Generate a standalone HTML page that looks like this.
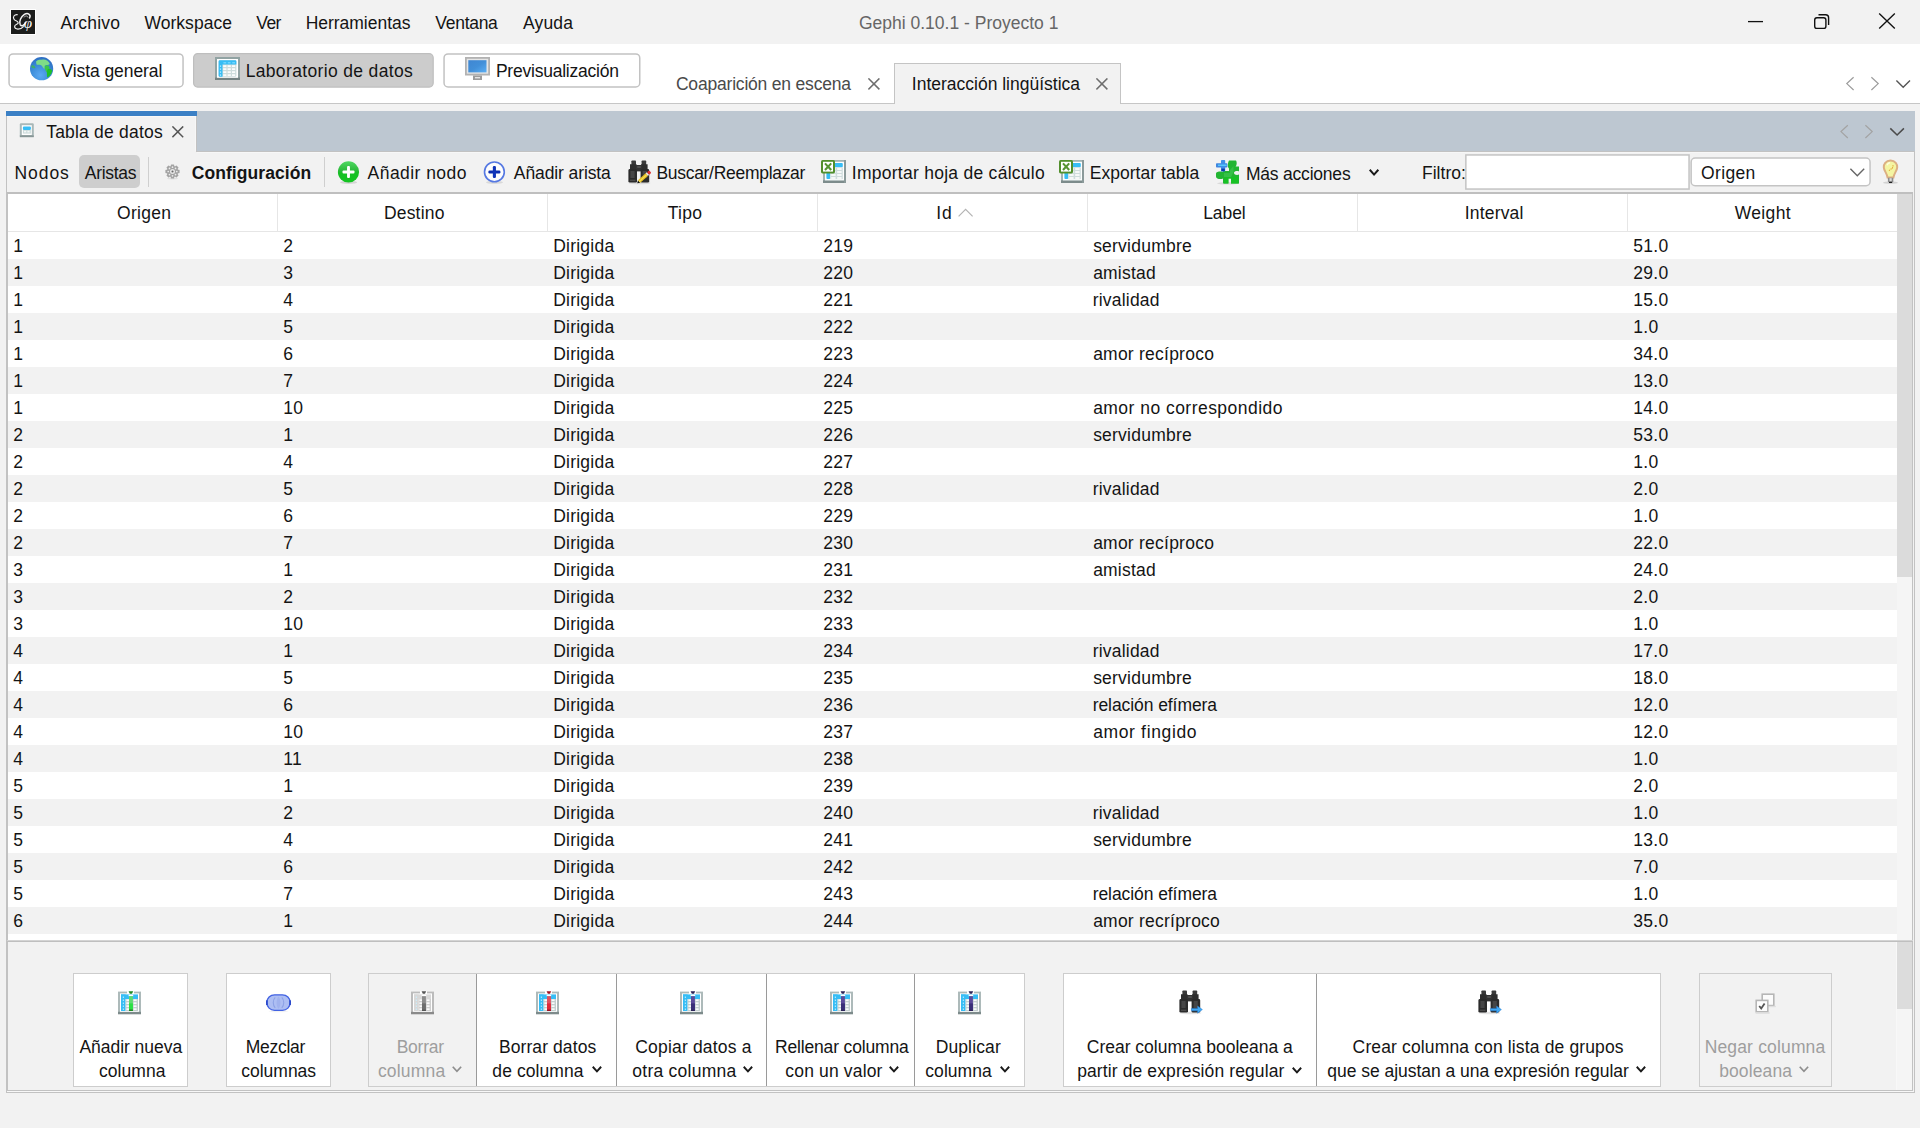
<!DOCTYPE html>
<html lang="es"><head><meta charset="utf-8"><title>Gephi 0.10.1 - Proyecto 1</title>
<style>
html,body{margin:0;padding:0}
body{width:1920px;height:1128px;overflow:hidden;background:#f2f2f2;position:relative;font-family:"Liberation Sans",sans-serif}
.a{position:absolute;display:block}
.t{position:absolute;white-space:pre;font-size:17.5px;line-height:1;color:#141414}
</style></head>
<body>
<svg class="a" style="left:10px;top:9px" width="26" height="26" viewBox="0 0 26 26"><rect x="0" y="0" width="26" height="26" fill="#fff"/><rect x="1" y="1" width="24" height="24" fill="#1c1d1c"/><g fill="none" stroke="#f2f2f2" stroke-linecap="round"><path d="M7.2 5.6 C4.2 5.4 2.6 8 4 10.2 C5.2 12 8.2 11.8 8.2 14 C8.2 15.6 4.6 15 4.6 17.6 C4.6 20.8 10.5 21 13.4 17.6" stroke-width="1.15"/><path d="M19.6 9 C21.4 5.2 17.6 3.4 14.4 5.4 C10.8 7.8 8.8 12.6 10.2 15.6 C11.4 18 14.4 16.4 15.6 13.4" stroke-width="1.5"/><path d="M14 8.2 C15.4 6.6 17.6 6.4 18 8.2" stroke-width="0.8" stroke="#cfcfcf"/></g><text x="13.8" y="19.2" font-family="Liberation Serif, serif" font-style="italic" font-size="15" fill="#ffffff">φ</text></svg>
<svg class="a" style="left:1740px;top:8px" width="170" height="28" viewBox="0 0 170 28"><path d="M8 13.6 H23" stroke="#111" stroke-width="1.3" fill="none"/><rect x="74.7" y="9.8" width="11.2" height="10.6" rx="2.2" fill="none" stroke="#111" stroke-width="1.4"/><path d="M78.5 6.7 H85.6 a3 3 0 0 1 3 3 V17" fill="none" stroke="#111" stroke-width="1.4"/><path d="M139.2 5.4 L154.8 20.6 M154.8 5.4 L139.2 20.6" stroke="#111" stroke-width="1.35" fill="none"/></svg>
<div class="a" style="left:0px;top:44px;width:1920px;height:59px;background:#fff;"></div>
<div class="a" style="left:0px;top:103px;width:1920px;height:1px;background:#c6c6c6;"></div>
<svg class="a" style="left:7px;top:52px" width="179" height="38" viewBox="0 0 179 38"><rect x="2.05" y="1.95" width="174.00" height="33.00" rx="4" fill="#fff" stroke="#c2c2c2" stroke-width="1.5"/></svg>
<svg class="a" style="left:192px;top:52px" width="244" height="38" viewBox="0 0 244 38"><rect x="1.60" y="1.70" width="239.60" height="33.40" rx="4" fill="#cccccc" stroke="#bebebe" stroke-width="1.2"/></svg>
<svg class="a" style="left:442px;top:52px" width="201" height="38" viewBox="0 0 201 38"><rect x="2.05" y="1.95" width="195.70" height="33.00" rx="4" fill="#fff" stroke="#c2c2c2" stroke-width="1.5"/></svg>
<svg class="a" style="left:29px;top:56px" width="26" height="26" viewBox="0 0 26 26"><defs><radialGradient id="gl" cx="0.45" cy="0.78" r="0.75"><stop offset="0" stop-color="#5aa9f2"/><stop offset="0.6" stop-color="#3a8ad6"/><stop offset="1" stop-color="#2f6fc4"/></radialGradient></defs><circle cx="12.6" cy="12.7" r="11.6" fill="url(#gl)"/><path d="M7 5.5 C9 3.5 12 4 14 3.6 C17 3.4 20 5.5 20.8 8 C19 9.5 18 8.5 16 9.5 C15 11 16 12 15.5 13 C14 12 13.5 10.5 12.5 9.5 C11 8 9 9.5 7.5 8.5 Z" fill="#7fdc86"/><path d="M16 10 C18 8.5 20 9.5 20.5 11.5 C19.5 13.5 18.5 15 18.2 17 C17 16 16.5 14 15.8 12.5 Z" fill="#3cc648"/><path d="M18.3 13.8 C20 11.8 22.5 13 23.2 15 C22.5 18 20.5 20.5 18.2 21.5 C17.6 19 18 16 18.3 13.8 Z" fill="#1fc02a"/><path d="M2.6 9.5 C4.5 8.5 6 10 6.4 12 C5 12.6 3.5 12 2.2 11 Z" fill="#3fae6a"/></svg>
<svg class="a" style="left:215px;top:57px" width="25" height="23" viewBox="0 0 25 23"><rect x="0" y="0" width="25" height="23" fill="#91a3a3"/><rect x="0" y="20.6" width="25" height="2.4" fill="#748282"/><rect x="2" y="2" width="21" height="18.8" fill="#fff"/><rect x="3.6" y="3.2" width="17.8" height="16.5" rx="1.2" fill="#cddcdc"/><path d="M4.8 3.2 H20.2 a1.2 1.2 0 0 1 1.2 1.2 V7.4 H7.5 V19.7 H4.8 a1.2 1.2 0 0 1 -1.2 -1.2 V4.4 a1.2 1.2 0 0 1 1.2 -1.2 Z" fill="#37bdf5"/><rect x="8.2" y="8.3" width="3.2" height="1.6" fill="#fff"/><rect x="8.2" y="11.3" width="3.2" height="1.6" fill="#fff"/><rect x="8.2" y="14.3" width="3.2" height="1.6" fill="#fff"/><rect x="8.2" y="17.3" width="3.2" height="1.6" fill="#fff"/><rect x="12.6" y="8.3" width="3.2" height="1.6" fill="#fff"/><rect x="12.6" y="11.3" width="3.2" height="1.6" fill="#fff"/><rect x="12.6" y="14.3" width="3.2" height="1.6" fill="#fff"/><rect x="12.6" y="17.3" width="3.2" height="1.6" fill="#fff"/><rect x="17.0" y="8.3" width="3.2" height="1.6" fill="#fff"/><rect x="17.0" y="11.3" width="3.2" height="1.6" fill="#fff"/><rect x="17.0" y="14.3" width="3.2" height="1.6" fill="#fff"/><rect x="17.0" y="17.3" width="3.2" height="1.6" fill="#fff"/><rect x="8.4" y="5.2" width="2.8" height="1.2" fill="#7fdcff"/><rect x="12.8" y="5.2" width="2.8" height="1.2" fill="#7fdcff"/><rect x="17.200000000000003" y="5.2" width="2.8" height="1.2" fill="#7fdcff"/><rect x="4.9" y="8.5" width="1.2" height="1.2" fill="#c8f2ff"/><rect x="4.9" y="11.5" width="1.2" height="1.2" fill="#c8f2ff"/><rect x="4.9" y="14.5" width="1.2" height="1.2" fill="#c8f2ff"/><rect x="4.9" y="17.5" width="1.2" height="1.2" fill="#c8f2ff"/></svg>
<svg class="a" style="left:465px;top:57px" width="25" height="24" viewBox="0 0 25 24"><rect x="0" y="0" width="25" height="18.5" fill="#b2b2b2"/><rect x="1.8" y="1.8" width="21.4" height="14.9" fill="#e6e6e6"/><defs><linearGradient id="mo" x1="0" y1="0" x2="1" y2="1"><stop offset="0" stop-color="#3f86d2"/><stop offset="0.5" stop-color="#428fd8"/><stop offset="1" stop-color="#5aaef4"/></linearGradient></defs><rect x="3.3" y="3.2" width="18.2" height="12.2" fill="url(#mo)"/><rect x="8" y="18.5" width="9" height="4.5" fill="#9c9c9c"/><rect x="10" y="20" width="5" height="1.4" fill="#e4e4e4"/></svg>
<div class="a" style="left:894px;top:63px;width:227px;height:41px;background:#f2f2f2;border:1px solid #c4c4c4;border-bottom:none;box-sizing:border-box;"></div>
<svg class="a" style="left:868.1px;top:78.3px" width="12" height="12" viewBox="0 0 12 12"><path d="M0.4 0.4 L11.4 11.4 M11.4 0.4 L0.4 11.4" stroke="#6e6e6e" stroke-width="1.5" fill="none"/></svg>
<svg class="a" style="left:1096.3px;top:78.3px" width="12" height="12" viewBox="0 0 12 12"><path d="M0.4 0.4 L11.4 11.4 M11.4 0.4 L0.4 11.4" stroke="#6e6e6e" stroke-width="1.5" fill="none"/></svg>
<svg class="a" style="left:1840px;top:74px" width="76" height="20" viewBox="0 0 76 20"><path d="M13.6 3.2 L6.8 9.6 L13.6 16" stroke="#9c9c9c" stroke-width="1.2" fill="none"/><path d="M31.4 3.2 L38.2 9.6 L31.4 16" stroke="#9c9c9c" stroke-width="1.2" fill="none"/><path d="M56.4 6.6 L63.2 13.2 L70 6.6" stroke="#555" stroke-width="1.4" fill="none"/></svg>
<div class="a" style="left:6px;top:111px;width:1909px;height:40px;background:#bdc7d1;"></div>
<div class="a" style="left:6px;top:111px;width:191px;height:40px;background:#f2f2f2;"></div>
<div class="a" style="left:6px;top:111px;width:191px;height:5px;background:#3b80c5;"></div>
<div class="a" style="left:6px;top:110px;width:191px;height:1px;background:#f9f8f6;"></div>
<div class="a" style="left:7px;top:116px;width:189px;height:1px;background:#faf8f6;"></div>
<div class="a" style="left:196px;top:116px;width:1px;height:36px;background:#c2c2c2;"></div>
<div class="a" style="left:195px;top:117px;width:1px;height:34px;background:#f7f7f7;"></div>
<div class="a" style="left:196px;top:151px;width:1719px;height:1px;background:#c2c2c2;"></div>
<div class="a" style="left:197px;top:152px;width:1717px;height:1px;background:#f7f7f7;"></div>
<div class="a" style="left:6px;top:116px;width:1px;height:977px;background:#c2c2c2;"></div>
<div class="a" style="left:6px;top:1092px;width:1909px;height:1px;background:#c2c2c2;"></div>
<div class="a" style="left:1914px;top:151px;width:1px;height:942px;background:#c2c2c2;"></div>
<svg class="a" style="left:19px;top:122px" width="16" height="16" viewBox="0 0 16 16"><rect x="0.8" y="1.2" width="14" height="13.8" rx="1.2" fill="#a9b8b8"/><rect x="0.8" y="13.4" width="14" height="1.8" fill="#879696"/><rect x="2.8" y="3.2" width="10" height="9.8" fill="#fff"/><rect x="3.9" y="4.4" width="8" height="3.6" rx="1" fill="#37bdf5"/><rect x="3.9" y="8" width="8" height="3.6" fill="#cddcdc"/><rect x="5" y="8.8" width="2.2" height="1.6" fill="#f4f8f8"/><rect x="8.4" y="8.8" width="2.2" height="1.6" fill="#f4f8f8"/></svg>
<svg class="a" style="left:172.3px;top:126.4px" width="12" height="12" viewBox="0 0 12 12"><path d="M0.4 0.4 L11.2 11.2 M11.2 0.4 L0.4 11.2" stroke="#555" stroke-width="1.5" fill="none"/></svg>
<svg class="a" style="left:1834px;top:122px" width="76" height="20" viewBox="0 0 76 20"><path d="M13.8 3.2 L7 9.6 L13.8 16" stroke="#a3a3a3" stroke-width="1.2" fill="none"/><path d="M31.4 3.2 L38.2 9.6 L31.4 16" stroke="#a3a3a3" stroke-width="1.2" fill="none"/><path d="M56.3 6.4 L63.1 13 L69.9 6.4" stroke="#4b4b4b" stroke-width="1.5" fill="none"/></svg>
<div class="a" style="left:79px;top:155px;width:61px;height:33px;background:#cecece;border-radius:5px;"></div>
<div class="a" style="left:148px;top:157px;width:1px;height:30px;background:#cfcfcf;"></div>
<div class="a" style="left:324px;top:157px;width:1px;height:30px;background:#cfcfcf;"></div>
<svg class="a" style="left:165.2px;top:163.5px" width="15" height="16" viewBox="0 0 15 16"><ellipse cx="7.5" cy="14.6" rx="5.5" ry="0.9" fill="#000" opacity="0.07"/><rect x="-1.7" y="-7.1" width="3.4" height="3" rx="0.6" transform="translate(7.5,7.5) rotate(0)" fill="#a3a3a3"/><rect x="-1.7" y="-7.1" width="3.4" height="3" rx="0.6" transform="translate(7.5,7.5) rotate(45)" fill="#a3a3a3"/><rect x="-1.7" y="-7.1" width="3.4" height="3" rx="0.6" transform="translate(7.5,7.5) rotate(90)" fill="#a3a3a3"/><rect x="-1.7" y="-7.1" width="3.4" height="3" rx="0.6" transform="translate(7.5,7.5) rotate(135)" fill="#a3a3a3"/><rect x="-1.7" y="-7.1" width="3.4" height="3" rx="0.6" transform="translate(7.5,7.5) rotate(180)" fill="#a3a3a3"/><rect x="-1.7" y="-7.1" width="3.4" height="3" rx="0.6" transform="translate(7.5,7.5) rotate(225)" fill="#a3a3a3"/><rect x="-1.7" y="-7.1" width="3.4" height="3" rx="0.6" transform="translate(7.5,7.5) rotate(270)" fill="#a3a3a3"/><rect x="-1.7" y="-7.1" width="3.4" height="3" rx="0.6" transform="translate(7.5,7.5) rotate(315)" fill="#a3a3a3"/><circle cx="7.5" cy="7.5" r="5.7" fill="#a3a3a3"/><circle cx="7.50" cy="3.20" r="0.85" fill="#ededed"/><circle cx="10.54" cy="4.46" r="0.85" fill="#ededed"/><circle cx="11.80" cy="7.50" r="0.85" fill="#ededed"/><circle cx="10.54" cy="10.54" r="0.85" fill="#ededed"/><circle cx="7.50" cy="11.80" r="0.85" fill="#ededed"/><circle cx="4.46" cy="10.54" r="0.85" fill="#ededed"/><circle cx="3.20" cy="7.50" r="0.85" fill="#ededed"/><circle cx="4.46" cy="4.46" r="0.85" fill="#ededed"/><circle cx="7.5" cy="7.5" r="2.5" fill="#e6e6e6"/><circle cx="7.5" cy="7.5" r="1.05" fill="#686868"/></svg>
<svg class="a" style="left:337px;top:160px" width="24" height="26" viewBox="0 0 24 26"><defs><linearGradient id="gp" x1="0" y1="0" x2="0" y2="1"><stop offset="0" stop-color="#4fd862"/><stop offset="0.45" stop-color="#2bb83a"/><stop offset="0.55" stop-color="#16c024"/><stop offset="1" stop-color="#14c422"/></linearGradient></defs><ellipse cx="11.6" cy="22.4" rx="8.5" ry="1.6" fill="#000" opacity="0.12"/><circle cx="11.5" cy="11.9" r="10.6" fill="url(#gp)"/><rect x="5.5" y="10.5" width="12" height="2.9" rx="1" fill="#fff"/><rect x="10.05" y="6" width="2.9" height="12" rx="1" fill="#fff"/></svg>
<svg class="a" style="left:483px;top:160px" width="24" height="26" viewBox="0 0 24 26"><ellipse cx="11.5" cy="22.4" rx="8.5" ry="1.5" fill="#000" opacity="0.10"/><circle cx="11.4" cy="11.9" r="9.9" fill="#fdfdfd" stroke="#5578e2" stroke-width="1.6"/><rect x="5.4" y="10.4" width="12" height="3.1" rx="1.2" fill="#0b2db0"/><rect x="9.85" y="6" width="3.1" height="12" rx="1.2" fill="#1034b8"/></svg>
<svg class="a" style="left:628px;top:160px" width="25" height="25" viewBox="0 0 25 25"><ellipse cx="11.5" cy="23" rx="11" ry="1.3" fill="#000" opacity="0.10"/><rect x="3.4" y="0.4" width="4.6" height="5" rx="0.8" fill="#3a3a3a"/><rect x="13.6" y="0.4" width="4.6" height="5" rx="0.8" fill="#3a3a3a"/><path d="M2 4.2 H8.6 V10 H2 Z M13 4.2 H19.6 V10 H13 Z" fill="#2e2e2e"/><rect x="8" y="5" width="6" height="6.4" fill="#333"/><rect x="9.2" y="6.2" width="3.6" height="1.6" fill="#555"/><rect x="0.4" y="9" width="8.6" height="13.6" rx="1.4" fill="#2b2b2b"/><rect x="12.6" y="9" width="8.6" height="13.6" rx="1.4" fill="#2b2b2b"/><rect x="2.4" y="11" width="4.2" height="7" fill="#454545"/><rect x="14.6" y="11" width="4.2" height="7" fill="#454545"/><rect x="2" y="19.6" width="5.4" height="1.4" fill="#4a4a4a"/><g transform="translate(9.3,23.2) rotate(-42)"><path d="M0 0 L2.4 -1.7 L2.4 1.7 Z" fill="#111"/><rect x="2.4" y="-1.7" width="10.4" height="3.4" fill="#e8c020"/><rect x="2.4" y="-0.5" width="10.4" height="1" fill="#f6e060"/><rect x="12.8" y="-1.7" width="1.6" height="3.4" fill="#eee"/><rect x="14.4" y="-1.7" width="3" height="3.4" rx="1" fill="#e03030"/></g></svg>
<svg class="a" style="left:821px;top:160px" width="26" height="24" viewBox="0 0 26 24"><rect x="2" y="0" width="23" height="23" fill="#a3b3b3"/><rect x="2" y="20.4" width="23" height="2.6" fill="#7d8c8c"/><rect x="23" y="0" width="2" height="23" fill="#8b9a9a"/><rect x="4" y="1.8" width="19" height="18.6" fill="#fdfefe"/><rect x="5.4" y="3" width="16.4" height="4.2" rx="1" fill="#37bdf5"/><rect x="5.4" y="3" width="3.8" height="16" rx="1" fill="#37bdf5"/><rect x="9.4" y="7.4" width="12.4" height="11.8" fill="#cfdcdc"/><rect x="10.2" y="8.2" width="4.4" height="1.6" fill="#fff"/><rect x="10.2" y="11.2" width="4.4" height="1.6" fill="#fff"/><rect x="10.2" y="14.2" width="4.4" height="1.6" fill="#fff"/><rect x="10.2" y="17.2" width="4.4" height="1.6" fill="#fff"/><rect x="16.2" y="8.2" width="4.4" height="1.6" fill="#fff"/><rect x="16.2" y="11.2" width="4.4" height="1.6" fill="#fff"/><rect x="16.2" y="14.2" width="4.4" height="1.6" fill="#fff"/><rect x="16.2" y="17.2" width="4.4" height="1.6" fill="#fff"/><rect x="0" y="0" width="14" height="13.4" rx="1.6" fill="#528f2c"/><rect x="2" y="1.8" width="10" height="9.8" fill="#fff"/><path d="M4 3.4 L10.2 10 M10.2 3.4 L4 10" stroke="#569432" stroke-width="2.1" fill="none"/></svg>
<svg class="a" style="left:1059px;top:160px" width="26" height="24" viewBox="0 0 26 24"><rect x="2" y="0" width="23" height="23" fill="#a3b3b3"/><rect x="2" y="20.4" width="23" height="2.6" fill="#7d8c8c"/><rect x="23" y="0" width="2" height="23" fill="#8b9a9a"/><rect x="4" y="1.8" width="19" height="18.6" fill="#fdfefe"/><rect x="5.4" y="3" width="16.4" height="4.2" rx="1" fill="#37bdf5"/><rect x="5.4" y="3" width="3.8" height="16" rx="1" fill="#37bdf5"/><rect x="9.4" y="7.4" width="12.4" height="11.8" fill="#cfdcdc"/><rect x="10.2" y="8.2" width="4.4" height="1.6" fill="#fff"/><rect x="10.2" y="11.2" width="4.4" height="1.6" fill="#fff"/><rect x="10.2" y="14.2" width="4.4" height="1.6" fill="#fff"/><rect x="10.2" y="17.2" width="4.4" height="1.6" fill="#fff"/><rect x="16.2" y="8.2" width="4.4" height="1.6" fill="#fff"/><rect x="16.2" y="11.2" width="4.4" height="1.6" fill="#fff"/><rect x="16.2" y="14.2" width="4.4" height="1.6" fill="#fff"/><rect x="16.2" y="17.2" width="4.4" height="1.6" fill="#fff"/><rect x="0" y="0" width="14" height="13.4" rx="1.6" fill="#528f2c"/><rect x="2" y="1.8" width="10" height="9.8" fill="#fff"/><path d="M4 3.4 L10.2 10 M10.2 3.4 L4 10" stroke="#569432" stroke-width="2.1" fill="none"/></svg>
<svg class="a" style="left:1215px;top:159px" width="26" height="26" viewBox="0 0 26 26"><ellipse cx="13" cy="24.3" rx="11" ry="1.2" fill="#000" opacity="0.10"/><path d="M8 12 H14 V9.5 C12 8 13 3 14 1.5 H21 C22 3 22 6 20.6 7.5 H24 V12.5 C22.5 11.5 19 12 19 14 C19 16 22.5 16.5 24 15.5 V24.5 H16 V19.5 H13.4 V24.5 H8 V19.5 C6.5 20.5 1 20.5 1 17.5 V14.5 C1 12.5 6.5 12 8 13 Z" fill="#22b532"/><path d="M9 14 H15 V11 L18.5 7 V13 L16 18 H9 Z" fill="#3fc450" opacity="0.7"/><path d="M14 18 H23.5 V24.5 H16 V19.5 H13.4 V24.5 H9 V19 Z" fill="#16c222" opacity="0.9"/><rect x="1" y="4.2" width="11.4" height="4.4" rx="0.8" fill="#3f86e0"/><rect x="6" y="1" width="4.2" height="11.4" rx="0.8" fill="#3f8fe8"/><rect x="3" y="5.6" width="8.6" height="1.3" fill="#5ad0ff"/><rect x="6.4" y="9.6" width="3.4" height="2.6" fill="#0a3aa8"/></svg>
<svg class="a" style="left:1366.8px;top:166.8px" width="14.6" height="10.8" viewBox="0 0 14.6 10.8"><path d="M2.75 2.75 L7.05 7.55 L11.35 2.75" stroke="#1a1a1a" stroke-width="2.0" fill="none"/></svg>
<svg class="a" style="left:1464px;top:153px" width="228" height="39" viewBox="0 0 228 39"><rect x="1.85" y="1.95" width="223.20" height="34.10" rx="0" fill="#fff" stroke="#c4c4c4" stroke-width="1.5"/></svg>
<svg class="a" style="left:1689px;top:156px" width="184" height="33" viewBox="0 0 184 33"><rect x="2.15" y="2.05" width="178.90" height="27.70" rx="4" fill="#fff" stroke="#c4c4c4" stroke-width="1.5"/></svg>
<svg class="a" style="left:1848px;top:166px" width="20" height="14" viewBox="0 0 20 14"><path d="M2.4 2.8 L9.3 9.8 L16.2 2.8" stroke="#666" stroke-width="1.4" fill="none"/></svg>
<svg class="a" style="left:1881px;top:159px" width="20" height="26" viewBox="0 0 20 26"><ellipse cx="9.5" cy="23.7" rx="7.5" ry="1.2" fill="#000" opacity="0.13"/><path d="M9.5 1.6 C14.4 1.6 16.4 5.2 16.2 8.4 C16 11.8 13.2 13.8 12.4 18.6 H6.6 C5.8 13.8 3 11.8 2.8 8.4 C2.6 5.2 4.6 1.6 9.5 1.6 Z" fill="#f4f5a2" stroke="#dcb083" stroke-width="2"/><path d="M8 11.6 L9.4 10.4 L11.2 9.6 L12 7.6 L12 6" stroke="#e0a030" stroke-width="1.1" fill="none" stroke-dasharray="1.2 0.8"/><path d="M6 6.2 C6.6 4.6 7.8 3.8 9 3.8" stroke="#fdfde0" stroke-width="1.4" fill="none"/><rect x="6.9" y="18.8" width="5.4" height="4.2" fill="#8c8c8c"/><rect x="8.5" y="19.2" width="2.2" height="3.2" fill="#dcdcdc"/><rect x="7.9" y="22.8" width="3.4" height="1.3" rx="0.6" fill="#222"/></svg>
<div class="a" style="left:7px;top:192px;width:1906px;height:2px;background:#bfbfbf;"></div>
<div class="a" style="left:7px;top:194px;width:1px;height:897px;background:#c2c2c2;"></div>
<div class="a" style="left:1912px;top:194px;width:1px;height:897px;background:#c2c2c2;"></div>
<div class="a" style="left:8px;top:194px;width:1889px;height:38px;background:#fff;"></div>
<div class="a" style="left:8px;top:232px;width:1889px;height:27px;background:#fff;"></div>
<div class="a" style="left:8px;top:259px;width:1889px;height:27px;background:#f2f2f2;"></div>
<div class="a" style="left:8px;top:286px;width:1889px;height:27px;background:#fff;"></div>
<div class="a" style="left:8px;top:313px;width:1889px;height:27px;background:#f2f2f2;"></div>
<div class="a" style="left:8px;top:340px;width:1889px;height:27px;background:#fff;"></div>
<div class="a" style="left:8px;top:367px;width:1889px;height:27px;background:#f2f2f2;"></div>
<div class="a" style="left:8px;top:394px;width:1889px;height:27px;background:#fff;"></div>
<div class="a" style="left:8px;top:421px;width:1889px;height:27px;background:#f2f2f2;"></div>
<div class="a" style="left:8px;top:448px;width:1889px;height:27px;background:#fff;"></div>
<div class="a" style="left:8px;top:475px;width:1889px;height:27px;background:#f2f2f2;"></div>
<div class="a" style="left:8px;top:502px;width:1889px;height:27px;background:#fff;"></div>
<div class="a" style="left:8px;top:529px;width:1889px;height:27px;background:#f2f2f2;"></div>
<div class="a" style="left:8px;top:556px;width:1889px;height:27px;background:#fff;"></div>
<div class="a" style="left:8px;top:583px;width:1889px;height:27px;background:#f2f2f2;"></div>
<div class="a" style="left:8px;top:610px;width:1889px;height:27px;background:#fff;"></div>
<div class="a" style="left:8px;top:637px;width:1889px;height:27px;background:#f2f2f2;"></div>
<div class="a" style="left:8px;top:664px;width:1889px;height:27px;background:#fff;"></div>
<div class="a" style="left:8px;top:691px;width:1889px;height:27px;background:#f2f2f2;"></div>
<div class="a" style="left:8px;top:718px;width:1889px;height:27px;background:#fff;"></div>
<div class="a" style="left:8px;top:745px;width:1889px;height:27px;background:#f2f2f2;"></div>
<div class="a" style="left:8px;top:772px;width:1889px;height:27px;background:#fff;"></div>
<div class="a" style="left:8px;top:799px;width:1889px;height:27px;background:#f2f2f2;"></div>
<div class="a" style="left:8px;top:826px;width:1889px;height:27px;background:#fff;"></div>
<div class="a" style="left:8px;top:853px;width:1889px;height:27px;background:#f2f2f2;"></div>
<div class="a" style="left:8px;top:880px;width:1889px;height:27px;background:#fff;"></div>
<div class="a" style="left:8px;top:907px;width:1889px;height:27px;background:#f2f2f2;"></div>
<div class="a" style="left:8px;top:934px;width:1889px;height:6px;background:#fff;"></div>
<div class="a" style="left:8px;top:231px;width:1889px;height:1px;background:#e6e6e6;"></div>
<div class="a" style="left:277px;top:194px;width:1px;height:37px;background:#e6e6e6;"></div>
<div class="a" style="left:547px;top:194px;width:1px;height:37px;background:#e6e6e6;"></div>
<div class="a" style="left:817px;top:194px;width:1px;height:37px;background:#e6e6e6;"></div>
<div class="a" style="left:1087px;top:194px;width:1px;height:37px;background:#e6e6e6;"></div>
<div class="a" style="left:1357px;top:194px;width:1px;height:37px;background:#e6e6e6;"></div>
<div class="a" style="left:1627px;top:194px;width:1px;height:37px;background:#e6e6e6;"></div>
<svg class="a" style="left:957px;top:207px" width="18" height="12" viewBox="0 0 18 12"><path d="M1.6 9.4 L8.6 2.4 L15.6 9.4" stroke="#b4b4b4" stroke-width="1.2" fill="none"/></svg>
<div class="a" style="left:1897px;top:194px;width:15px;height:746px;background:#f5f5f5;"></div>
<div class="a" style="left:1897px;top:194px;width:15px;height:383px;background:#dbdbdb;"></div>
<div class="a" style="left:7px;top:940px;width:1906px;height:1px;background:#d4d4d4;"></div>
<div class="a" style="left:7px;top:941px;width:1906px;height:1px;background:#bfbfbf;"></div>
<div class="a" style="left:8px;top:942px;width:1889px;height:148px;background:#f2f2f2;"></div>
<div class="a" style="left:1896px;top:942px;width:1px;height:148px;background:#f8f8f8;"></div>
<div class="a" style="left:1897px;top:942px;width:15px;height:148px;background:#f5f5f5;"></div>
<div class="a" style="left:1897px;top:942px;width:15px;height:67px;background:#dcdcdc;"></div>
<div class="a" style="left:7px;top:1090px;width:1906px;height:1px;background:#c2c2c2;"></div>
<div class="a" style="left:7px;top:1091px;width:1907px;height:1px;background:#f8f8f8;"></div>
<div class="a" style="left:73px;top:973px;width:115px;height:114px;background:#fff;border:1px solid #cdcdcd;box-sizing:border-box;"></div>
<div class="a" style="left:226px;top:973px;width:105px;height:114px;background:#fff;border:1px solid #cdcdcd;box-sizing:border-box;"></div>
<div class="a" style="left:368px;top:973px;width:657px;height:114px;background:#fff;border:1px solid #cdcdcd;box-sizing:border-box;"></div>
<div class="a" style="left:369px;top:974px;width:107px;height:112px;background:#f2f2f2;"></div>
<div class="a" style="left:476px;top:974px;width:1px;height:112px;background:#9a9a9a;"></div>
<div class="a" style="left:616px;top:974px;width:1px;height:112px;background:#9a9a9a;"></div>
<div class="a" style="left:766px;top:974px;width:1px;height:112px;background:#9a9a9a;"></div>
<div class="a" style="left:914px;top:974px;width:1px;height:112px;background:#9a9a9a;"></div>
<div class="a" style="left:1063px;top:973px;width:598px;height:114px;background:#fff;border:1px solid #cdcdcd;box-sizing:border-box;"></div>
<div class="a" style="left:1316px;top:974px;width:1px;height:112px;background:#9a9a9a;"></div>
<div class="a" style="left:1699px;top:973px;width:133px;height:114px;background:#f2f2f2;border:1px solid #cdcdcd;box-sizing:border-box;"></div>
<svg class="a" style="left:118px;top:990.6px" width="23" height="24" viewBox="0 0 23 24"><rect x="0" y="0.6" width="23" height="22.6" fill="#adbaba"/><rect x="0" y="20.8" width="23" height="2.4" fill="#7d8b8b"/><rect x="2" y="2.4" width="19" height="18.4" fill="#fff"/><rect x="3" y="3.4" width="17" height="4.6" fill="#37bdf5"/><rect x="3" y="3.4" width="4.6" height="16.6" fill="#37bdf5"/><rect x="7.6" y="8" width="12.4" height="12" fill="#c3cfcf"/><rect x="8.4" y="8.4" width="3" height="1.5" fill="#fff"/><rect x="8.4" y="11.4" width="3" height="1.5" fill="#fff"/><rect x="8.4" y="14.4" width="3" height="1.5" fill="#fff"/><rect x="8.4" y="17.4" width="3" height="1.5" fill="#fff"/><rect x="15.600000000000001" y="8.4" width="3" height="1.5" fill="#fff"/><rect x="15.600000000000001" y="11.4" width="3" height="1.5" fill="#fff"/><rect x="15.600000000000001" y="14.4" width="3" height="1.5" fill="#fff"/><rect x="15.600000000000001" y="17.4" width="3" height="1.5" fill="#fff"/><rect x="4.8" y="5.6" width="1.2" height="1.2" fill="#c8f0ff"/><rect x="4.8" y="8.6" width="1.2" height="1.2" fill="#c8f0ff"/><rect x="4.8" y="11.6" width="1.2" height="1.2" fill="#c8f0ff"/><rect x="4.8" y="14.6" width="1.2" height="1.2" fill="#c8f0ff"/><rect x="4.8" y="17.6" width="1.2" height="1.2" fill="#c8f0ff"/><rect x="9" y="0" width="7" height="3" fill="#fff"/><path d="M10.6 0.2 H15.2 L14 2.8 H11.8 Z" fill="#1d8a22"/><rect x="10.6" y="3.6" width="4.6" height="1.6" fill="#fff"/><rect x="11" y="5.2" width="3.9" height="14.8" fill="#5fdc72"/><rect x="11" y="12.4" width="3.9" height="6" fill="#2be044"/><rect x="11" y="18.4" width="3.9" height="1.6" fill="#1d8a22"/></svg>
<svg class="a" style="left:410.6px;top:990.6px" width="23" height="24" viewBox="0 0 23 24"><rect x="0" y="0.6" width="23" height="22.6" fill="#bcbcbc"/><rect x="0" y="20.8" width="23" height="2.4" fill="#8a8a8a"/><rect x="2" y="2.4" width="19" height="18.4" fill="#fff"/><rect x="3" y="3.4" width="17" height="4.6" fill="#d8d8d8"/><rect x="3" y="3.4" width="4.6" height="16.6" fill="#d8d8d8"/><rect x="7.6" y="8" width="12.4" height="12" fill="#cfcfcf"/><rect x="8.4" y="8.4" width="3" height="1.5" fill="#fff"/><rect x="8.4" y="11.4" width="3" height="1.5" fill="#fff"/><rect x="8.4" y="14.4" width="3" height="1.5" fill="#fff"/><rect x="8.4" y="17.4" width="3" height="1.5" fill="#fff"/><rect x="15.600000000000001" y="8.4" width="3" height="1.5" fill="#fff"/><rect x="15.600000000000001" y="11.4" width="3" height="1.5" fill="#fff"/><rect x="15.600000000000001" y="14.4" width="3" height="1.5" fill="#fff"/><rect x="15.600000000000001" y="17.4" width="3" height="1.5" fill="#fff"/><rect x="4.8" y="5.6" width="1.2" height="1.2" fill="#c8f0ff"/><rect x="4.8" y="8.6" width="1.2" height="1.2" fill="#c8f0ff"/><rect x="4.8" y="11.6" width="1.2" height="1.2" fill="#c8f0ff"/><rect x="4.8" y="14.6" width="1.2" height="1.2" fill="#c8f0ff"/><rect x="4.8" y="17.6" width="1.2" height="1.2" fill="#c8f0ff"/><rect x="9" y="0" width="7" height="3" fill="#fff"/><path d="M10.6 0.2 H15.2 L14 2.8 H11.8 Z" fill="#555"/><rect x="10.6" y="3.6" width="4.6" height="1.6" fill="#fff"/><rect x="11" y="5.2" width="3.9" height="14.8" fill="#8c8c8c"/><rect x="11" y="12.4" width="3.9" height="6" fill="#6e6e6e"/><rect x="11" y="18.4" width="3.9" height="1.6" fill="#555"/></svg>
<svg class="a" style="left:535.6px;top:990.6px" width="23" height="24" viewBox="0 0 23 24"><rect x="0" y="0.6" width="23" height="22.6" fill="#adbaba"/><rect x="0" y="20.8" width="23" height="2.4" fill="#7d8b8b"/><rect x="2" y="2.4" width="19" height="18.4" fill="#fff"/><rect x="3" y="3.4" width="17" height="4.6" fill="#37bdf5"/><rect x="3" y="3.4" width="4.6" height="16.6" fill="#37bdf5"/><rect x="7.6" y="8" width="12.4" height="12" fill="#c3cfcf"/><rect x="8.4" y="8.4" width="3" height="1.5" fill="#fff"/><rect x="8.4" y="11.4" width="3" height="1.5" fill="#fff"/><rect x="8.4" y="14.4" width="3" height="1.5" fill="#fff"/><rect x="8.4" y="17.4" width="3" height="1.5" fill="#fff"/><rect x="15.600000000000001" y="8.4" width="3" height="1.5" fill="#fff"/><rect x="15.600000000000001" y="11.4" width="3" height="1.5" fill="#fff"/><rect x="15.600000000000001" y="14.4" width="3" height="1.5" fill="#fff"/><rect x="15.600000000000001" y="17.4" width="3" height="1.5" fill="#fff"/><rect x="4.8" y="5.6" width="1.2" height="1.2" fill="#c8f0ff"/><rect x="4.8" y="8.6" width="1.2" height="1.2" fill="#c8f0ff"/><rect x="4.8" y="11.6" width="1.2" height="1.2" fill="#c8f0ff"/><rect x="4.8" y="14.6" width="1.2" height="1.2" fill="#c8f0ff"/><rect x="4.8" y="17.6" width="1.2" height="1.2" fill="#c8f0ff"/><rect x="9" y="0" width="7" height="3" fill="#fff"/><path d="M10.6 0.2 H15.2 L14 2.8 H11.8 Z" fill="#a01020"/><rect x="10.6" y="3.6" width="4.6" height="1.6" fill="#fff"/><rect x="11" y="5.2" width="3.9" height="14.8" fill="#e05060"/><rect x="11" y="12.4" width="3.9" height="6" fill="#e02838"/><rect x="11" y="18.4" width="3.9" height="1.6" fill="#a01020"/></svg>
<svg class="a" style="left:679.8px;top:990.6px" width="23" height="24" viewBox="0 0 23 24"><rect x="0" y="0.6" width="23" height="22.6" fill="#adbaba"/><rect x="0" y="20.8" width="23" height="2.4" fill="#7d8b8b"/><rect x="2" y="2.4" width="19" height="18.4" fill="#fff"/><rect x="3" y="3.4" width="17" height="4.6" fill="#37bdf5"/><rect x="3" y="3.4" width="4.6" height="16.6" fill="#37bdf5"/><rect x="7.6" y="8" width="12.4" height="12" fill="#c3cfcf"/><rect x="8.4" y="8.4" width="3" height="1.5" fill="#fff"/><rect x="8.4" y="11.4" width="3" height="1.5" fill="#fff"/><rect x="8.4" y="14.4" width="3" height="1.5" fill="#fff"/><rect x="8.4" y="17.4" width="3" height="1.5" fill="#fff"/><rect x="15.600000000000001" y="8.4" width="3" height="1.5" fill="#fff"/><rect x="15.600000000000001" y="11.4" width="3" height="1.5" fill="#fff"/><rect x="15.600000000000001" y="14.4" width="3" height="1.5" fill="#fff"/><rect x="15.600000000000001" y="17.4" width="3" height="1.5" fill="#fff"/><rect x="4.8" y="5.6" width="1.2" height="1.2" fill="#c8f0ff"/><rect x="4.8" y="8.6" width="1.2" height="1.2" fill="#c8f0ff"/><rect x="4.8" y="11.6" width="1.2" height="1.2" fill="#c8f0ff"/><rect x="4.8" y="14.6" width="1.2" height="1.2" fill="#c8f0ff"/><rect x="4.8" y="17.6" width="1.2" height="1.2" fill="#c8f0ff"/><rect x="9" y="0" width="7" height="3" fill="#fff"/><path d="M10.6 0.2 H15.2 L14 2.8 H11.8 Z" fill="#2a2258"/><rect x="10.6" y="3.6" width="4.6" height="1.6" fill="#fff"/><rect x="11" y="5.2" width="3.9" height="14.8" fill="#5b4a9a"/><rect x="11" y="12.4" width="3.9" height="6" fill="#3a2f78"/><rect x="11" y="18.4" width="3.9" height="1.6" fill="#2a2258"/></svg>
<svg class="a" style="left:829.9px;top:990.6px" width="23" height="24" viewBox="0 0 23 24"><rect x="0" y="0.6" width="23" height="22.6" fill="#adbaba"/><rect x="0" y="20.8" width="23" height="2.4" fill="#7d8b8b"/><rect x="2" y="2.4" width="19" height="18.4" fill="#fff"/><rect x="3" y="3.4" width="17" height="4.6" fill="#37bdf5"/><rect x="3" y="3.4" width="4.6" height="16.6" fill="#37bdf5"/><rect x="7.6" y="8" width="12.4" height="12" fill="#c3cfcf"/><rect x="8.4" y="8.4" width="3" height="1.5" fill="#fff"/><rect x="8.4" y="11.4" width="3" height="1.5" fill="#fff"/><rect x="8.4" y="14.4" width="3" height="1.5" fill="#fff"/><rect x="8.4" y="17.4" width="3" height="1.5" fill="#fff"/><rect x="15.600000000000001" y="8.4" width="3" height="1.5" fill="#fff"/><rect x="15.600000000000001" y="11.4" width="3" height="1.5" fill="#fff"/><rect x="15.600000000000001" y="14.4" width="3" height="1.5" fill="#fff"/><rect x="15.600000000000001" y="17.4" width="3" height="1.5" fill="#fff"/><rect x="4.8" y="5.6" width="1.2" height="1.2" fill="#c8f0ff"/><rect x="4.8" y="8.6" width="1.2" height="1.2" fill="#c8f0ff"/><rect x="4.8" y="11.6" width="1.2" height="1.2" fill="#c8f0ff"/><rect x="4.8" y="14.6" width="1.2" height="1.2" fill="#c8f0ff"/><rect x="4.8" y="17.6" width="1.2" height="1.2" fill="#c8f0ff"/><rect x="9" y="0" width="7" height="3" fill="#fff"/><path d="M10.6 0.2 H15.2 L14 2.8 H11.8 Z" fill="#2a2258"/><rect x="10.6" y="3.6" width="4.6" height="1.6" fill="#fff"/><rect x="11" y="5.2" width="3.9" height="14.8" fill="#5b4a9a"/><rect x="11" y="12.4" width="3.9" height="6" fill="#3a2f78"/><rect x="11" y="18.4" width="3.9" height="1.6" fill="#2a2258"/></svg>
<svg class="a" style="left:958.2px;top:990.6px" width="23" height="24" viewBox="0 0 23 24"><rect x="0" y="0.6" width="23" height="22.6" fill="#adbaba"/><rect x="0" y="20.8" width="23" height="2.4" fill="#7d8b8b"/><rect x="2" y="2.4" width="19" height="18.4" fill="#fff"/><rect x="3" y="3.4" width="17" height="4.6" fill="#37bdf5"/><rect x="3" y="3.4" width="4.6" height="16.6" fill="#37bdf5"/><rect x="7.6" y="8" width="12.4" height="12" fill="#c3cfcf"/><rect x="8.4" y="8.4" width="3" height="1.5" fill="#fff"/><rect x="8.4" y="11.4" width="3" height="1.5" fill="#fff"/><rect x="8.4" y="14.4" width="3" height="1.5" fill="#fff"/><rect x="8.4" y="17.4" width="3" height="1.5" fill="#fff"/><rect x="15.600000000000001" y="8.4" width="3" height="1.5" fill="#fff"/><rect x="15.600000000000001" y="11.4" width="3" height="1.5" fill="#fff"/><rect x="15.600000000000001" y="14.4" width="3" height="1.5" fill="#fff"/><rect x="15.600000000000001" y="17.4" width="3" height="1.5" fill="#fff"/><rect x="4.8" y="5.6" width="1.2" height="1.2" fill="#c8f0ff"/><rect x="4.8" y="8.6" width="1.2" height="1.2" fill="#c8f0ff"/><rect x="4.8" y="11.6" width="1.2" height="1.2" fill="#c8f0ff"/><rect x="4.8" y="14.6" width="1.2" height="1.2" fill="#c8f0ff"/><rect x="4.8" y="17.6" width="1.2" height="1.2" fill="#c8f0ff"/><rect x="9" y="0" width="7" height="3" fill="#fff"/><path d="M10.6 0.2 H15.2 L14 2.8 H11.8 Z" fill="#2a2258"/><rect x="10.6" y="3.6" width="4.6" height="1.6" fill="#fff"/><rect x="11" y="5.2" width="3.9" height="14.8" fill="#5b4a9a"/><rect x="11" y="12.4" width="3.9" height="6" fill="#3a2f78"/><rect x="11" y="18.4" width="3.9" height="1.6" fill="#2a2258"/></svg>
<svg class="a" style="left:265px;top:993px" width="27" height="20" viewBox="0 0 27 20"><ellipse cx="13.5" cy="18.3" rx="10" ry="0.9" fill="#000" opacity="0.05"/><rect x="1.8" y="1.8" width="23.4" height="15.6" rx="7.8" fill="#adbef3" stroke="#4262e2" stroke-width="1.3"/><path d="M1.9 7.2 V12 M25.1 7.2 V12" stroke="#1f3fc6" stroke-width="1.5" fill="none"/><path d="M10.2 4.4 C7.6 7 7.6 12.2 10.2 14.8 M16.8 4.4 C19.4 7 19.4 12.2 16.8 14.8" stroke="#8da2e6" stroke-width="1.1" fill="none"/><path d="M13.5 3.4 C16 6 16 13.2 13.5 15.8 C11 13.2 11 6 13.5 3.4 Z" fill="#a0b2ee"/></svg>
<svg class="a" style="left:1179.4px;top:990px" width="25" height="25" viewBox="0 0 25 25"><ellipse cx="11.5" cy="23" rx="11" ry="1.3" fill="#000" opacity="0.10"/><rect x="3.4" y="0.4" width="4.6" height="5" rx="0.8" fill="#3a3a3a"/><rect x="13.6" y="0.4" width="4.6" height="5" rx="0.8" fill="#3a3a3a"/><path d="M2 4.2 H8.6 V10 H2 Z M13 4.2 H19.6 V10 H13 Z" fill="#2e2e2e"/><rect x="8" y="5" width="6" height="6.4" fill="#333"/><rect x="9.2" y="6.2" width="3.6" height="1.6" fill="#555"/><rect x="0.4" y="9" width="8.6" height="13.6" rx="1.4" fill="#2b2b2b"/><rect x="12.6" y="9" width="8.6" height="13.6" rx="1.4" fill="#2b2b2b"/><rect x="2.4" y="11" width="4.2" height="7" fill="#454545"/><rect x="14.6" y="11" width="4.2" height="7" fill="#454545"/><rect x="2" y="19.6" width="5.4" height="1.4" fill="#4a4a4a"/><path d="M12.4 18.4 H18.6 V16 L23.4 19.6 L18.6 23.2 V20.8 H12.4 Z" fill="#3fa8f4" stroke="#2a7fd4" stroke-width="0.5"/></svg>
<svg class="a" style="left:1478.4px;top:990px" width="25" height="25" viewBox="0 0 25 25"><ellipse cx="11.5" cy="23" rx="11" ry="1.3" fill="#000" opacity="0.10"/><rect x="3.4" y="0.4" width="4.6" height="5" rx="0.8" fill="#3a3a3a"/><rect x="13.6" y="0.4" width="4.6" height="5" rx="0.8" fill="#3a3a3a"/><path d="M2 4.2 H8.6 V10 H2 Z M13 4.2 H19.6 V10 H13 Z" fill="#2e2e2e"/><rect x="8" y="5" width="6" height="6.4" fill="#333"/><rect x="9.2" y="6.2" width="3.6" height="1.6" fill="#555"/><rect x="0.4" y="9" width="8.6" height="13.6" rx="1.4" fill="#2b2b2b"/><rect x="12.6" y="9" width="8.6" height="13.6" rx="1.4" fill="#2b2b2b"/><rect x="2.4" y="11" width="4.2" height="7" fill="#454545"/><rect x="14.6" y="11" width="4.2" height="7" fill="#454545"/><rect x="2" y="19.6" width="5.4" height="1.4" fill="#4a4a4a"/><path d="M12.4 18.4 H18.6 V16 L23.4 19.6 L18.6 23.2 V20.8 H12.4 Z" fill="#3fa8f4" stroke="#2a7fd4" stroke-width="0.5"/></svg>
<svg class="a" style="left:1755px;top:993px" width="22" height="22" viewBox="0 0 22 22"><rect x="7.2" y="1.2" width="11.6" height="11.4" fill="#fbfbfb" stroke="#b6b6b6" stroke-width="1.6"/><rect x="7.2" y="12.8" width="13.6" height="1.4" fill="#dedede"/><rect x="1.2" y="7.4" width="11.6" height="11.4" fill="#fdfdfd" stroke="#b6b6b6" stroke-width="1.6"/><rect x="0.6" y="19.2" width="14" height="1.6" fill="#dedede"/><path d="M4.2 13 L6.2 15.4 L9.6 10.4" stroke="#555" stroke-width="1.8" fill="none"/></svg>
<svg class="a" style="left:450.2px;top:1063.8px" width="14.4" height="10.6" viewBox="0 0 14.4 10.6"><path d="M2.75 2.75 L6.95 7.35 L11.15 2.75" stroke="#8e8e8e" stroke-width="1.7" fill="none"/></svg>
<svg class="a" style="left:589.7px;top:1063.8px" width="14.4" height="10.6" viewBox="0 0 14.4 10.6"><path d="M2.75 2.75 L6.95 7.35 L11.15 2.75" stroke="#1a1a1a" stroke-width="1.9" fill="none"/></svg>
<svg class="a" style="left:741.3px;top:1063.8px" width="14.4" height="10.6" viewBox="0 0 14.4 10.6"><path d="M2.75 2.75 L6.95 7.35 L11.15 2.75" stroke="#1a1a1a" stroke-width="1.9" fill="none"/></svg>
<svg class="a" style="left:887px;top:1063.8px" width="14.4" height="10.6" viewBox="0 0 14.4 10.6"><path d="M2.75 2.75 L6.95 7.35 L11.15 2.75" stroke="#1a1a1a" stroke-width="1.9" fill="none"/></svg>
<svg class="a" style="left:998px;top:1063.8px" width="14.4" height="10.6" viewBox="0 0 14.4 10.6"><path d="M2.75 2.75 L6.95 7.35 L11.15 2.75" stroke="#1a1a1a" stroke-width="1.9" fill="none"/></svg>
<svg class="a" style="left:1290px;top:1064.5px" width="14.4" height="10.6" viewBox="0 0 14.4 10.6"><path d="M2.75 2.75 L6.95 7.35 L11.15 2.75" stroke="#1a1a1a" stroke-width="1.9" fill="none"/></svg>
<svg class="a" style="left:1633.7px;top:1063.8px" width="14.4" height="10.6" viewBox="0 0 14.4 10.6"><path d="M2.75 2.75 L6.95 7.35 L11.15 2.75" stroke="#1a1a1a" stroke-width="1.9" fill="none"/></svg>
<svg class="a" style="left:1797px;top:1063.8px" width="14.4" height="10.6" viewBox="0 0 14.4 10.6"><path d="M2.75 2.75 L6.95 7.35 L11.15 2.75" stroke="#8e8e8e" stroke-width="1.7" fill="none"/></svg>
<span class="t" style="left:60.41px;top:15.02px;letter-spacing:0.191px;">Archivo</span>
<span class="t" style="left:144.41px;top:15.02px;letter-spacing:0.048px;">Workspace</span>
<span class="t" style="left:256.27px;top:15.02px;letter-spacing:-0.577px;">Ver</span>
<span class="t" style="left:305.63px;top:15.02px;letter-spacing:-0.015px;">Herramientas</span>
<span class="t" style="left:435.37px;top:15.02px;letter-spacing:-0.294px;">Ventana</span>
<span class="t" style="left:523.11px;top:15.02px;letter-spacing:0.123px;">Ayuda</span>
<span class="t" style="left:858.97px;top:15.02px;color:#666;">Gephi 0.10.1 - Proyecto 1</span>
<span class="t" style="left:61.37px;top:62.72px;letter-spacing:-0.069px;">Vista general</span>
<span class="t" style="left:245.63px;top:62.72px;letter-spacing:0.349px;">Laboratorio de datos</span>
<span class="t" style="left:495.93px;top:62.72px;letter-spacing:-0.231px;">Previsualización</span>
<span class="t" style="left:675.91px;top:76.02px;letter-spacing:-0.194px;color:#4a4a4a;">Coaparición en escena</span>
<span class="t" style="left:911.87px;top:76.02px;letter-spacing:-0.007px;">Interacción lingüística</span>
<span class="t" style="left:46.21px;top:124.02px;letter-spacing:0.203px;">Tabla de datos</span>
<span class="t" style="left:14.53px;top:165.02px;letter-spacing:0.935px;">Nodos</span>
<span class="t" style="left:84.86px;top:165.02px;letter-spacing:-0.308px;">Aristas</span>
<span class="t" style="left:191.67px;top:165.02px;letter-spacing:0.085px;font-weight:700;">Configuración</span>
<span class="t" style="left:367.61px;top:165.02px;letter-spacing:0.446px;">Añadir nodo</span>
<span class="t" style="left:513.86px;top:165.02px;letter-spacing:-0.109px;">Añadir arista</span>
<span class="t" style="left:656.43px;top:165.02px;letter-spacing:-0.294px;">Buscar/Reemplazar</span>
<span class="t" style="left:851.77px;top:165.02px;letter-spacing:0.268px;">Importar hoja de cálculo</span>
<span class="t" style="left:1089.68px;top:165.02px;letter-spacing:0.043px;">Exportar tabla</span>
<span class="t" style="left:1245.93px;top:166.02px;letter-spacing:-0.206px;">Más acciones</span>
<span class="t" style="left:1421.93px;top:165.02px;letter-spacing:0.052px;">Filtro:</span>
<span class="t" style="left:1701.00px;top:165.02px;letter-spacing:0.351px;">Origen</span>
<span class="t" style="left:117.10px;top:205.02px;letter-spacing:0.271px;">Origen</span>
<span class="t" style="left:383.93px;top:205.02px;letter-spacing:0.189px;">Destino</span>
<span class="t" style="left:667.66px;top:205.02px;letter-spacing:0.286px;">Tipo</span>
<span class="t" style="left:936.37px;top:205.02px;letter-spacing:0.808px;">Id</span>
<span class="t" style="left:1203.23px;top:205.02px;letter-spacing:-0.095px;">Label</span>
<span class="t" style="left:1464.77px;top:205.02px;letter-spacing:0.171px;">Interval</span>
<span class="t" style="left:1734.71px;top:205.02px;letter-spacing:0.345px;">Weight</span>
<span class="t" style="left:79.41px;top:1039.32px;letter-spacing:-0.037px;">Añadir nueva</span>
<span class="t" style="left:98.94px;top:1062.82px;letter-spacing:0.062px;">columna</span>
<span class="t" style="left:245.63px;top:1039.32px;letter-spacing:-0.252px;">Mezclar</span>
<span class="t" style="left:241.34px;top:1062.82px;letter-spacing:-0.025px;">columnas</span>
<span class="t" style="left:396.63px;top:1039.32px;letter-spacing:-0.222px;color:#9e9e9e;">Borrar</span>
<span class="t" style="left:377.94px;top:1062.82px;letter-spacing:0.178px;color:#9e9e9e;">columna</span>
<span class="t" style="left:498.93px;top:1039.32px;letter-spacing:0.092px;">Borrar datos</span>
<span class="t" style="left:492.35px;top:1062.82px;letter-spacing:0.083px;">de columna</span>
<span class="t" style="left:635.31px;top:1039.32px;letter-spacing:0.175px;">Copiar datos a</span>
<span class="t" style="left:632.35px;top:1062.82px;letter-spacing:0.241px;">otra columna</span>
<span class="t" style="left:774.93px;top:1039.32px;letter-spacing:-0.155px;">Rellenar columna</span>
<span class="t" style="left:785.34px;top:1062.82px;letter-spacing:0.162px;">con un valor</span>
<span class="t" style="left:935.63px;top:1039.32px;letter-spacing:0.130px;">Duplicar</span>
<span class="t" style="left:925.34px;top:1062.82px;letter-spacing:0.045px;">columna</span>
<span class="t" style="left:1086.81px;top:1039.32px;letter-spacing:-0.009px;">Crear columna booleana a</span>
<span class="t" style="left:1077.16px;top:1062.82px;letter-spacing:0.114px;">partir de expresión regular</span>
<span class="t" style="left:1352.61px;top:1039.32px;letter-spacing:0.139px;">Crear columna con lista de grupos</span>
<span class="t" style="left:1327.35px;top:1062.82px;letter-spacing:-0.031px;">que se ajustan a una expresión regular</span>
<span class="t" style="left:1704.63px;top:1039.32px;letter-spacing:0.163px;color:#9e9e9e;">Negar columna</span>
<span class="t" style="left:1719.16px;top:1062.82px;letter-spacing:0.125px;color:#9e9e9e;">booleana</span>
<span class="t" style="left:13.20px;top:237.82px;">1</span>
<span class="t" style="left:283.20px;top:237.82px;">2</span>
<span class="t" style="left:553.13px;top:237.82px;letter-spacing:0.240px;">Dirigida</span>
<span class="t" style="left:823.20px;top:237.82px;letter-spacing:0.300px;">219</span>
<span class="t" style="left:1093.13px;top:237.82px;letter-spacing:0.227px;">servidumbre</span>
<span class="t" style="left:1633.20px;top:237.82px;letter-spacing:0.300px;">51.0</span>
<span class="t" style="left:13.20px;top:264.82px;">1</span>
<span class="t" style="left:283.20px;top:264.82px;">3</span>
<span class="t" style="left:553.13px;top:264.82px;letter-spacing:0.240px;">Dirigida</span>
<span class="t" style="left:823.20px;top:264.82px;letter-spacing:0.300px;">220</span>
<span class="t" style="left:1093.13px;top:264.82px;letter-spacing:0.209px;">amistad</span>
<span class="t" style="left:1633.20px;top:264.82px;letter-spacing:0.300px;">29.0</span>
<span class="t" style="left:13.20px;top:291.82px;">1</span>
<span class="t" style="left:283.20px;top:291.82px;">4</span>
<span class="t" style="left:553.13px;top:291.82px;letter-spacing:0.240px;">Dirigida</span>
<span class="t" style="left:823.20px;top:291.82px;letter-spacing:0.300px;">221</span>
<span class="t" style="left:1092.65px;top:291.82px;letter-spacing:0.217px;">rivalidad</span>
<span class="t" style="left:1633.20px;top:291.82px;letter-spacing:0.300px;">15.0</span>
<span class="t" style="left:13.20px;top:318.82px;">1</span>
<span class="t" style="left:283.20px;top:318.82px;">5</span>
<span class="t" style="left:553.13px;top:318.82px;letter-spacing:0.240px;">Dirigida</span>
<span class="t" style="left:823.20px;top:318.82px;letter-spacing:0.300px;">222</span>
<span class="t" style="left:1633.20px;top:318.82px;letter-spacing:0.300px;">1.0</span>
<span class="t" style="left:13.20px;top:345.82px;">1</span>
<span class="t" style="left:283.20px;top:345.82px;">6</span>
<span class="t" style="left:553.13px;top:345.82px;letter-spacing:0.240px;">Dirigida</span>
<span class="t" style="left:823.20px;top:345.82px;letter-spacing:0.300px;">223</span>
<span class="t" style="left:1093.13px;top:345.82px;letter-spacing:0.235px;">amor recíproco</span>
<span class="t" style="left:1633.20px;top:345.82px;letter-spacing:0.300px;">34.0</span>
<span class="t" style="left:13.20px;top:372.82px;">1</span>
<span class="t" style="left:283.20px;top:372.82px;">7</span>
<span class="t" style="left:553.13px;top:372.82px;letter-spacing:0.240px;">Dirigida</span>
<span class="t" style="left:823.20px;top:372.82px;letter-spacing:0.300px;">224</span>
<span class="t" style="left:1633.20px;top:372.82px;letter-spacing:0.300px;">13.0</span>
<span class="t" style="left:13.20px;top:399.82px;">1</span>
<span class="t" style="left:283.20px;top:399.82px;letter-spacing:0.300px;">10</span>
<span class="t" style="left:553.13px;top:399.82px;letter-spacing:0.240px;">Dirigida</span>
<span class="t" style="left:823.20px;top:399.82px;letter-spacing:0.300px;">225</span>
<span class="t" style="left:1093.13px;top:399.82px;letter-spacing:0.469px;">amor no correspondido</span>
<span class="t" style="left:1633.20px;top:399.82px;letter-spacing:0.300px;">14.0</span>
<span class="t" style="left:13.20px;top:426.82px;">2</span>
<span class="t" style="left:283.20px;top:426.82px;">1</span>
<span class="t" style="left:553.13px;top:426.82px;letter-spacing:0.240px;">Dirigida</span>
<span class="t" style="left:823.20px;top:426.82px;letter-spacing:0.300px;">226</span>
<span class="t" style="left:1093.13px;top:426.82px;letter-spacing:0.227px;">servidumbre</span>
<span class="t" style="left:1633.20px;top:426.82px;letter-spacing:0.300px;">53.0</span>
<span class="t" style="left:13.20px;top:453.82px;">2</span>
<span class="t" style="left:283.20px;top:453.82px;">4</span>
<span class="t" style="left:553.13px;top:453.82px;letter-spacing:0.240px;">Dirigida</span>
<span class="t" style="left:823.20px;top:453.82px;letter-spacing:0.300px;">227</span>
<span class="t" style="left:1633.20px;top:453.82px;letter-spacing:0.300px;">1.0</span>
<span class="t" style="left:13.20px;top:480.82px;">2</span>
<span class="t" style="left:283.20px;top:480.82px;">5</span>
<span class="t" style="left:553.13px;top:480.82px;letter-spacing:0.240px;">Dirigida</span>
<span class="t" style="left:823.20px;top:480.82px;letter-spacing:0.300px;">228</span>
<span class="t" style="left:1092.65px;top:480.82px;letter-spacing:0.217px;">rivalidad</span>
<span class="t" style="left:1633.20px;top:480.82px;letter-spacing:0.300px;">2.0</span>
<span class="t" style="left:13.20px;top:507.82px;">2</span>
<span class="t" style="left:283.20px;top:507.82px;">6</span>
<span class="t" style="left:553.13px;top:507.82px;letter-spacing:0.240px;">Dirigida</span>
<span class="t" style="left:823.20px;top:507.82px;letter-spacing:0.300px;">229</span>
<span class="t" style="left:1633.20px;top:507.82px;letter-spacing:0.300px;">1.0</span>
<span class="t" style="left:13.20px;top:534.82px;">2</span>
<span class="t" style="left:283.20px;top:534.82px;">7</span>
<span class="t" style="left:553.13px;top:534.82px;letter-spacing:0.240px;">Dirigida</span>
<span class="t" style="left:823.20px;top:534.82px;letter-spacing:0.300px;">230</span>
<span class="t" style="left:1093.13px;top:534.82px;letter-spacing:0.235px;">amor recíproco</span>
<span class="t" style="left:1633.20px;top:534.82px;letter-spacing:0.300px;">22.0</span>
<span class="t" style="left:13.20px;top:561.82px;">3</span>
<span class="t" style="left:283.20px;top:561.82px;">1</span>
<span class="t" style="left:553.13px;top:561.82px;letter-spacing:0.240px;">Dirigida</span>
<span class="t" style="left:823.20px;top:561.82px;letter-spacing:0.300px;">231</span>
<span class="t" style="left:1093.13px;top:561.82px;letter-spacing:0.209px;">amistad</span>
<span class="t" style="left:1633.20px;top:561.82px;letter-spacing:0.300px;">24.0</span>
<span class="t" style="left:13.20px;top:588.82px;">3</span>
<span class="t" style="left:283.20px;top:588.82px;">2</span>
<span class="t" style="left:553.13px;top:588.82px;letter-spacing:0.240px;">Dirigida</span>
<span class="t" style="left:823.20px;top:588.82px;letter-spacing:0.300px;">232</span>
<span class="t" style="left:1633.20px;top:588.82px;letter-spacing:0.300px;">2.0</span>
<span class="t" style="left:13.20px;top:615.82px;">3</span>
<span class="t" style="left:283.20px;top:615.82px;letter-spacing:0.300px;">10</span>
<span class="t" style="left:553.13px;top:615.82px;letter-spacing:0.240px;">Dirigida</span>
<span class="t" style="left:823.20px;top:615.82px;letter-spacing:0.300px;">233</span>
<span class="t" style="left:1633.20px;top:615.82px;letter-spacing:0.300px;">1.0</span>
<span class="t" style="left:13.20px;top:642.82px;">4</span>
<span class="t" style="left:283.20px;top:642.82px;">1</span>
<span class="t" style="left:553.13px;top:642.82px;letter-spacing:0.240px;">Dirigida</span>
<span class="t" style="left:823.20px;top:642.82px;letter-spacing:0.300px;">234</span>
<span class="t" style="left:1092.65px;top:642.82px;letter-spacing:0.217px;">rivalidad</span>
<span class="t" style="left:1633.20px;top:642.82px;letter-spacing:0.300px;">17.0</span>
<span class="t" style="left:13.20px;top:669.82px;">4</span>
<span class="t" style="left:283.20px;top:669.82px;">5</span>
<span class="t" style="left:553.13px;top:669.82px;letter-spacing:0.240px;">Dirigida</span>
<span class="t" style="left:823.20px;top:669.82px;letter-spacing:0.300px;">235</span>
<span class="t" style="left:1093.13px;top:669.82px;letter-spacing:0.227px;">servidumbre</span>
<span class="t" style="left:1633.20px;top:669.82px;letter-spacing:0.300px;">18.0</span>
<span class="t" style="left:13.20px;top:696.82px;">4</span>
<span class="t" style="left:283.20px;top:696.82px;">6</span>
<span class="t" style="left:553.13px;top:696.82px;letter-spacing:0.240px;">Dirigida</span>
<span class="t" style="left:823.20px;top:696.82px;letter-spacing:0.300px;">236</span>
<span class="t" style="left:1092.65px;top:696.82px;letter-spacing:-0.070px;">relación efímera</span>
<span class="t" style="left:1633.20px;top:696.82px;letter-spacing:0.300px;">12.0</span>
<span class="t" style="left:13.20px;top:723.82px;">4</span>
<span class="t" style="left:283.20px;top:723.82px;letter-spacing:0.300px;">10</span>
<span class="t" style="left:553.13px;top:723.82px;letter-spacing:0.240px;">Dirigida</span>
<span class="t" style="left:823.20px;top:723.82px;letter-spacing:0.300px;">237</span>
<span class="t" style="left:1093.13px;top:723.82px;letter-spacing:0.652px;">amor fingido</span>
<span class="t" style="left:1633.20px;top:723.82px;letter-spacing:0.300px;">12.0</span>
<span class="t" style="left:13.20px;top:750.82px;">4</span>
<span class="t" style="left:283.20px;top:750.82px;letter-spacing:0.300px;">11</span>
<span class="t" style="left:553.13px;top:750.82px;letter-spacing:0.240px;">Dirigida</span>
<span class="t" style="left:823.20px;top:750.82px;letter-spacing:0.300px;">238</span>
<span class="t" style="left:1633.20px;top:750.82px;letter-spacing:0.300px;">1.0</span>
<span class="t" style="left:13.20px;top:777.82px;">5</span>
<span class="t" style="left:283.20px;top:777.82px;">1</span>
<span class="t" style="left:553.13px;top:777.82px;letter-spacing:0.240px;">Dirigida</span>
<span class="t" style="left:823.20px;top:777.82px;letter-spacing:0.300px;">239</span>
<span class="t" style="left:1633.20px;top:777.82px;letter-spacing:0.300px;">2.0</span>
<span class="t" style="left:13.20px;top:804.82px;">5</span>
<span class="t" style="left:283.20px;top:804.82px;">2</span>
<span class="t" style="left:553.13px;top:804.82px;letter-spacing:0.240px;">Dirigida</span>
<span class="t" style="left:823.20px;top:804.82px;letter-spacing:0.300px;">240</span>
<span class="t" style="left:1092.65px;top:804.82px;letter-spacing:0.217px;">rivalidad</span>
<span class="t" style="left:1633.20px;top:804.82px;letter-spacing:0.300px;">1.0</span>
<span class="t" style="left:13.20px;top:831.82px;">5</span>
<span class="t" style="left:283.20px;top:831.82px;">4</span>
<span class="t" style="left:553.13px;top:831.82px;letter-spacing:0.240px;">Dirigida</span>
<span class="t" style="left:823.20px;top:831.82px;letter-spacing:0.300px;">241</span>
<span class="t" style="left:1093.13px;top:831.82px;letter-spacing:0.227px;">servidumbre</span>
<span class="t" style="left:1633.20px;top:831.82px;letter-spacing:0.300px;">13.0</span>
<span class="t" style="left:13.20px;top:858.82px;">5</span>
<span class="t" style="left:283.20px;top:858.82px;">6</span>
<span class="t" style="left:553.13px;top:858.82px;letter-spacing:0.240px;">Dirigida</span>
<span class="t" style="left:823.20px;top:858.82px;letter-spacing:0.300px;">242</span>
<span class="t" style="left:1633.20px;top:858.82px;letter-spacing:0.300px;">7.0</span>
<span class="t" style="left:13.20px;top:885.82px;">5</span>
<span class="t" style="left:283.20px;top:885.82px;">7</span>
<span class="t" style="left:553.13px;top:885.82px;letter-spacing:0.240px;">Dirigida</span>
<span class="t" style="left:823.20px;top:885.82px;letter-spacing:0.300px;">243</span>
<span class="t" style="left:1092.65px;top:885.82px;letter-spacing:-0.070px;">relación efímera</span>
<span class="t" style="left:1633.20px;top:885.82px;letter-spacing:0.300px;">1.0</span>
<span class="t" style="left:13.20px;top:912.82px;">6</span>
<span class="t" style="left:283.20px;top:912.82px;">1</span>
<span class="t" style="left:553.13px;top:912.82px;letter-spacing:0.240px;">Dirigida</span>
<span class="t" style="left:823.20px;top:912.82px;letter-spacing:0.300px;">244</span>
<span class="t" style="left:1093.13px;top:912.82px;letter-spacing:0.228px;">amor recríproco</span>
<span class="t" style="left:1633.20px;top:912.82px;letter-spacing:0.300px;">35.0</span>
</body></html>
